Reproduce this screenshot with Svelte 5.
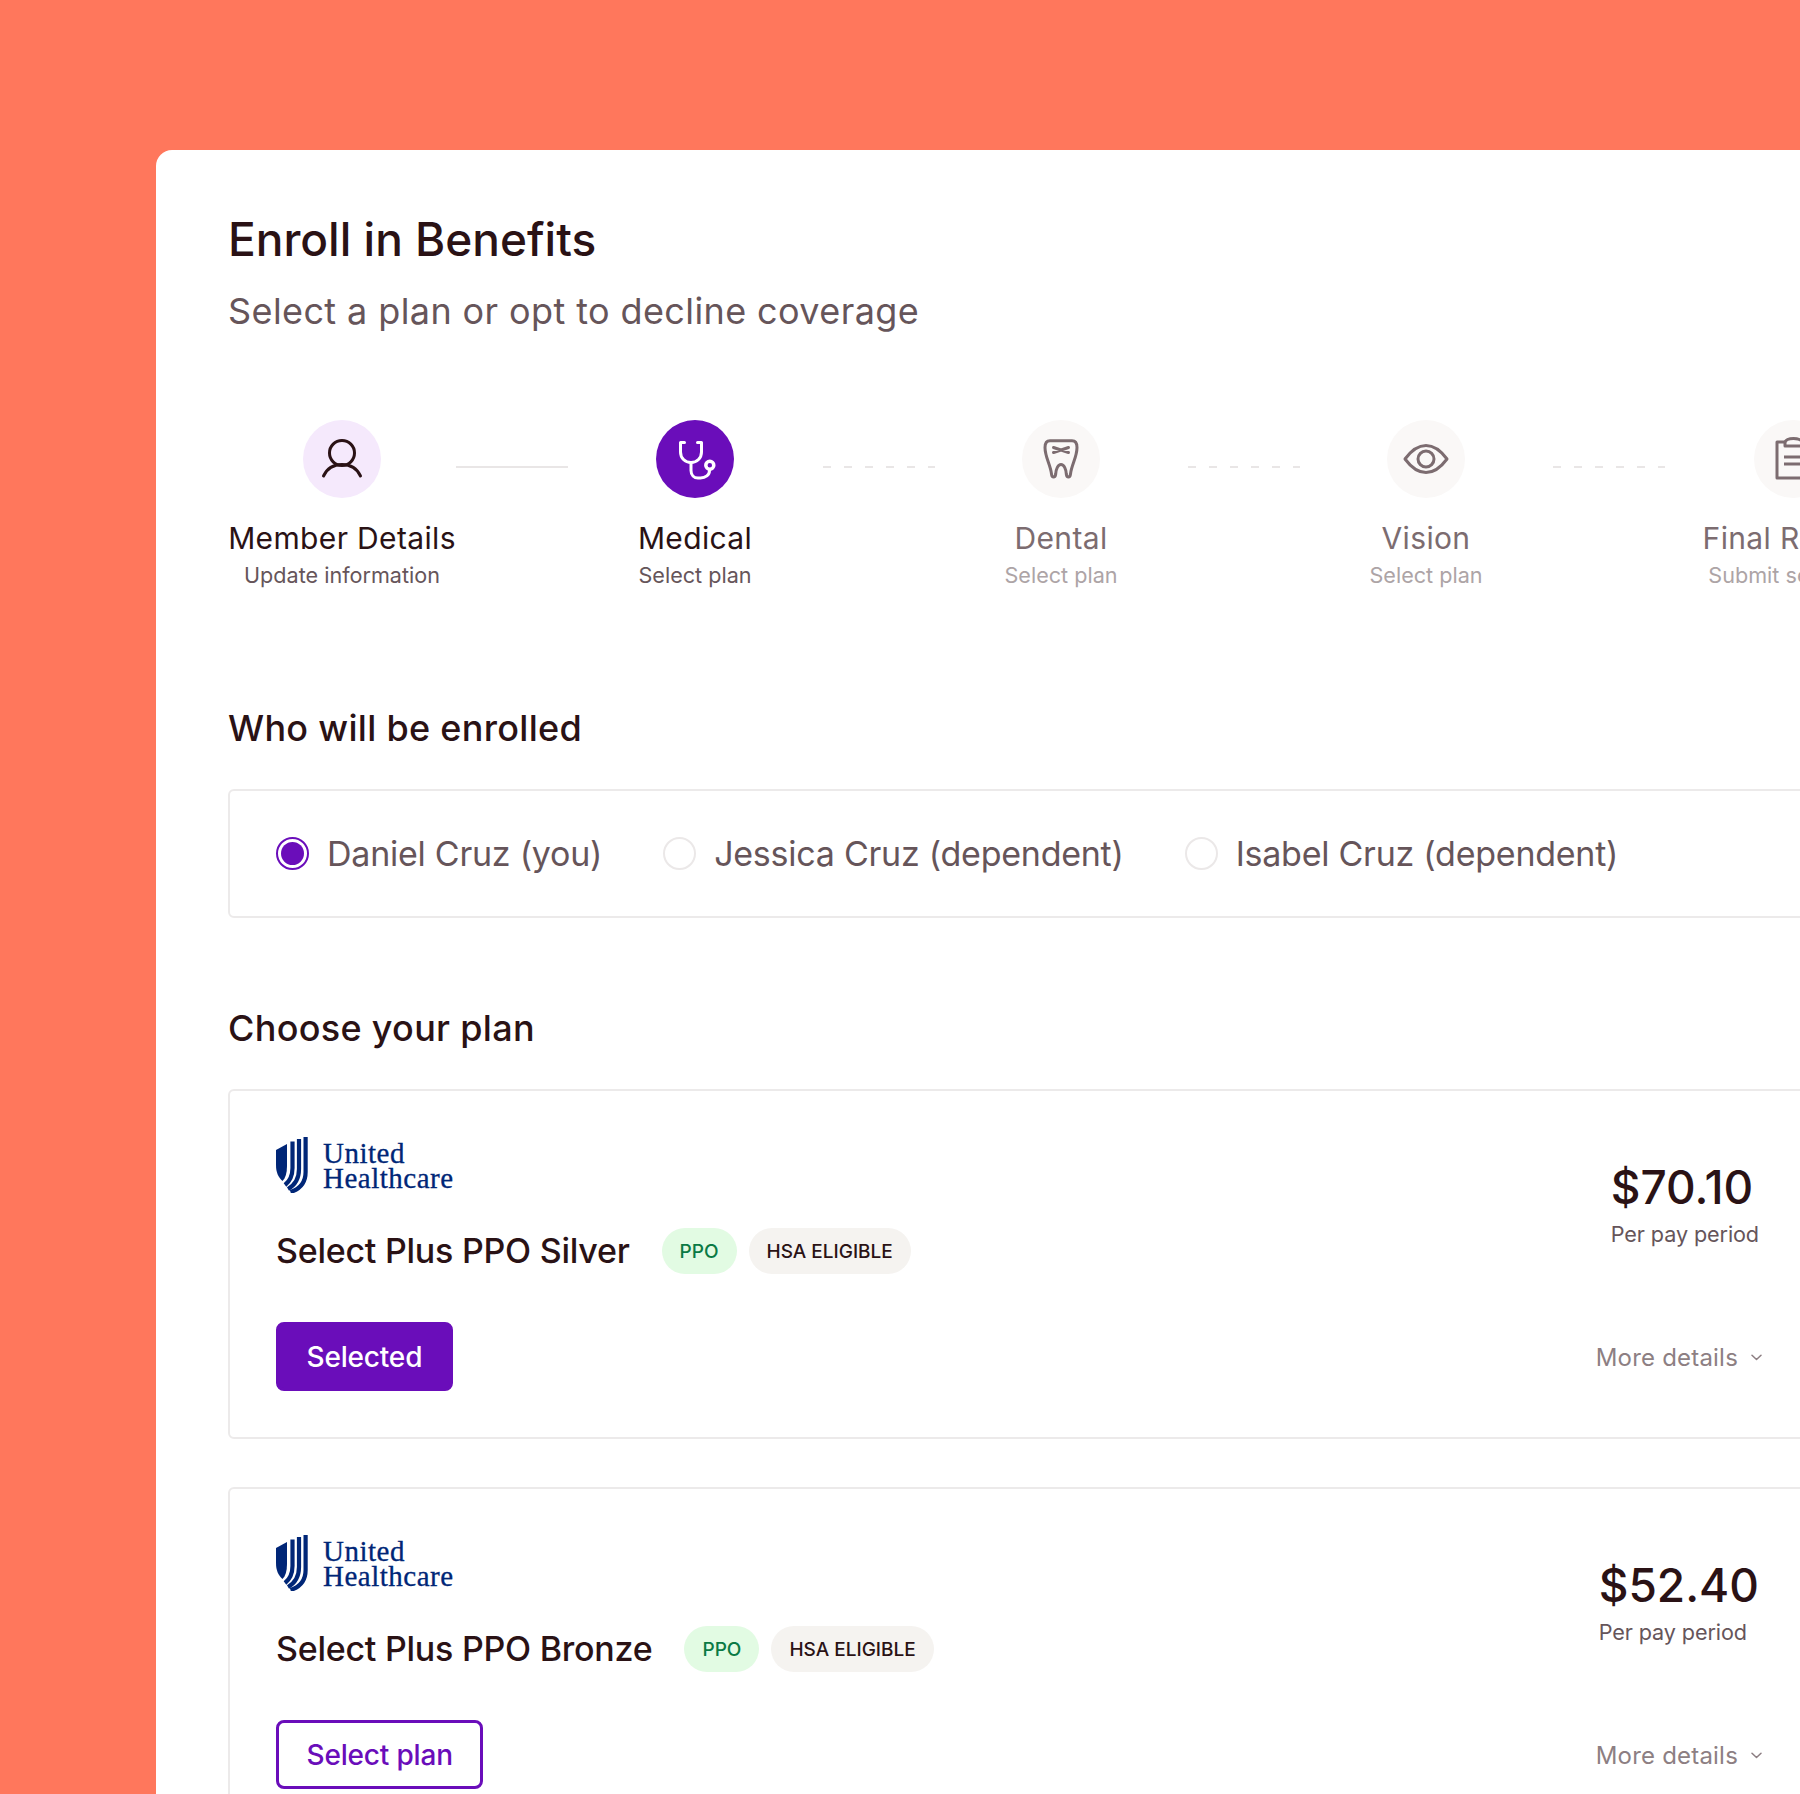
<script>
	const members = [
		{ name: 'Daniel Cruz (you)', checked: true },
		{ name: 'Jessica Cruz (dependent)', checked: false },
		{ name: 'Isabel Cruz (dependent)', checked: false }
	];

	const plans = [
		{ name: 'Select Plus PPO Silver', price: '$70.10', selected: true },
		{ name: 'Select Plus PPO Bronze', price: '$52.40', selected: false }
	];
</script>

{#snippet logo()}
	<div class="logo">
		<svg width="32" height="56" viewBox="0 0 32 56" fill="none" stroke="#002677" stroke-width="4.2">
			<path fill="#002677" stroke="none" d="M0 13L11 7V29C11 36 9.5 41 6.5 44C2 40 0 35 0 28Z" />
			<path d="M16.5 4.5V31C16.5 39 14 44 9 48" />
			<path d="M23 2V32C23 42 19 48 12 52" />
			<path d="M29.6 0V35C29.6 46 24 52 14.5 55" />
		</svg>
		<div class="wordmark">United<br />Healthcare</div>
	</div>
{/snippet}

<div class="page">
	<main class="card">
		<h1>Enroll in Benefits</h1>
		<p class="subtitle">Select a plan or opt to decline coverage</p>

		<div class="stepper">
			<div class="step done member">
				<div class="dot">
					<svg viewBox="0 0 48 48" width="48" height="48" fill="none" stroke="currentColor" stroke-width="3" stroke-linecap="round">
						<circle cx="24" cy="18" r="12.5" />
						<path d="M5.500 41C9 33.500 15.500 29.500 24 29.500C32.500 29.500 39 33.500 42.500 41" />
					</svg>
				</div>
				<div class="step-title">Member Details</div>
				<div class="step-sub">Update information</div>
			</div>
			<div class="line solid first"></div>

			<div class="step active">
				<div class="dot">
					<svg viewBox="0 0 48 48" width="48" height="48" fill="none" stroke="currentColor" stroke-width="3" stroke-linecap="round" stroke-linejoin="round">
						<path d="M13.500 7.500H9.500V17C9.500 23 14 27.500 20 27.500C26 27.500 30.500 23 30.500 17V7.500H26.500" />
						<path d="M20 27.500V35.500C20 40 23 43 27 43H29.500C34.500 43 38.500 40 38.500 35.500" />
						<circle cx="38.800" cy="30.200" r="4" stroke-width="3.500" />
					</svg>
				</div>
				<div class="step-title">Medical</div>
				<div class="step-sub">Select plan</div>
			</div>
			<div class="line"></div>

			<div class="step">
				<div class="dot">
					<svg viewBox="0 0 48 48" width="48" height="48" fill="none" stroke="currentColor" stroke-width="3" stroke-linecap="round" stroke-linejoin="round">
						<path d="M13 5.800H35C38.500 5.800 40 8.500 40 12.500C40 22 34.500 30 33.500 39C33 43 29.800 43 29.300 39C29 34 27 29.500 24 29.500C21 29.500 19 34 18.700 39C18.200 43 15 43 14.500 39C13.500 30 8 22 8 12.500C8 8.500 9.500 5.800 13 5.800Z" />
						<path d="M16.500 12.500L31.500 17.500M16.500 17.500L31.500 12.500" />
					</svg>
				</div>
				<div class="step-title">Dental</div>
				<div class="step-sub">Select plan</div>
			</div>
			<div class="line"></div>

			<div class="step">
				<div class="dot">
					<svg viewBox="0 0 48 48" width="48" height="48" fill="none" stroke="currentColor" stroke-width="3" stroke-linejoin="round">
						<path d="M3 24C10 14.500 17 10.500 24 10.500C31 10.500 38 14.500 45 24C38 33.500 31 37.500 24 37.500C17 37.500 10 33.500 3 24Z" />
						<circle cx="24" cy="24" r="8" />
					</svg>
				</div>
				<div class="step-title">Vision</div>
				<div class="step-sub">Select plan</div>
			</div>
			<div class="line last"></div>

			<div class="step final">
				<div class="dot">
					<svg viewBox="0 0 48 48" width="48" height="48" fill="none" stroke="currentColor" stroke-width="3" stroke-linejoin="round">
						<path d="M16 7H8V43H41V7H33" />
						<path d="M16 11H33V8C33 5 29 3.500 24.500 3.500C20 3.500 16 5 16 8Z" />
						<path d="M15 22H34M15 29H34" />
					</svg>
				</div>
				<div class="step-title">Final Review</div>
				<div class="step-sub">Submit selection</div>
			</div>
		</div>

		<h2>Who will be enrolled</h2>
		<div class="members">
			{#each members as member}
				<label class="member-option">
					<span class="radio" class:checked={member.checked}></span>
					{member.name}
				</label>
			{/each}
		</div>

		<h2 class="plans-heading">Choose your plan</h2>
		<div class="plans">
			{#each plans as plan}
				<section class="plan">
					<div class="plan-left">
						{@render logo()}
						<div class="plan-name-row">
							<h3>{plan.name}</h3>
							<span class="badge green">PPO</span>
							<span class="badge">HSA ELIGIBLE</span>
						</div>
						<button type="button" class="btn" class:filled={plan.selected}>
							{plan.selected ? 'Selected' : 'Select plan'}
						</button>
					</div>
					<div class="plan-right">
						<div class="price-block">
							<div class="price">{plan.price}</div>
							<div class="per">Per pay period</div>
						</div>
						<div class="more">
							More details
							<svg width="11" height="7" viewBox="0 0 11 7" fill="none" stroke="currentColor" stroke-width="1.500" stroke-linecap="round" stroke-linejoin="round">
								<path d="M1 1.200L5.500 5.500L10 1.200" />
							</svg>
						</div>
					</div>
				</section>
			{/each}
		</div>
	</main>
</div>

<style>
	:global(body) {
		margin: 0;
		background: #ff775c;
	}

	.page {
		height: 1794px;
		overflow: hidden;
		padding: 150px 0 0 156px;
		box-sizing: border-box;
		font-family: Inter, "Liberation Sans", sans-serif;
		color: #2a1215;
	}

	.card {
		width: 1726px;
		min-height: 1700px;
		box-sizing: border-box;
		padding: 59px 72px 0;
		background: #fff;
		border-radius: 16px 0 0 0;
	}

	h1 {
		margin: 0;
		font-size: 46px;
		line-height: 60px;
		font-weight: 470;
	}

	.subtitle {
		margin: 20px 0 0;
		font-size: 36px;
		line-height: 44px;
		letter-spacing: 0.4px;
		color: #66555a;
	}

	.stepper {
		display: flex;
		align-items: flex-start;
		margin-top: 87px;
		width: 1640px;
	}

	.step {
		flex: none;
		width: 112px;
		display: flex;
		flex-direction: column;
		align-items: center;
		white-space: nowrap;
		color: #7c6c70;
	}

	.step.member {
		width: 228px;
	}

	.step.active {
		width: 114px;
	}

	.step.final {
		width: 180px;
	}

	.dot {
		flex: none;
		width: 78px;
		height: 78px;
		border-radius: 50%;
		display: flex;
		align-items: center;
		justify-content: center;
		background: #faf8f7;
	}

	.done .dot {
		background: #f5e9fc;
		color: #2a1215;
	}

	.active .dot {
		background: #6a0dba;
		color: #fff;
	}

	.step-title {
		margin-top: 22px;
		font-size: 30px;
		line-height: 36px;
		letter-spacing: 0.35px;
	}

	.step-sub {
		margin-top: 1px;
		font-size: 21.6px;
		line-height: 36px;
		color: #ada4a6;
	}

	.done,
	.active {
		color: #2a1215;
	}

	.done .step-sub,
	.active .step-sub {
		color: #66555a;
	}

	.line {
		flex: none;
		width: 112px;
		height: 2px;
		margin: 46px 70px 0 71px;
		background: repeating-linear-gradient(90deg, #e9e6e6 0 8px, transparent 8px 21px);
	}

	.line.solid {
		background: #e9e6e6;
	}

	.line.first {
		margin-left: 0;
	}

	.line.last {
		margin-right: 38px;
	}

	h2 {
		margin: 113px 0 0;
		font-size: 36px;
		line-height: 44px;
		font-weight: 470;
		letter-spacing: 0.3px;
	}

	.plans-heading {
		margin-top: 88px;
	}

	.members {
		display: flex;
		align-items: center;
		gap: 61px;
		width: 1582px;
		height: 129px;
		margin-top: 39px;
		padding: 0 46px;
		box-sizing: border-box;
		border: 2px solid #eceaea;
		border-radius: 6px;
	}

	.member-option {
		display: flex;
		align-items: center;
		gap: 18px;
		font-size: 34px;
		letter-spacing: -0.25px;
		color: #66555a;
	}

	.radio {
		flex: none;
		width: 33px;
		height: 33px;
		box-sizing: border-box;
		border-radius: 50%;
		border: 2px solid #ebe8e8;
		background: #fff;
	}

	.radio.checked {
		border-color: #6a0dba;
		padding: 3px;
		background: #6a0dba content-box;
	}

	.plans {
		display: flex;
		flex-direction: column;
		gap: 48px;
		margin-top: 39px;
	}

	.plan {
		display: flex;
		justify-content: space-between;
		width: 1582px;
		box-sizing: border-box;
		padding: 46px;
		border: 2px solid #eceaea;
		border-radius: 6px;
	}

	.logo {
		display: flex;
		align-items: flex-start;
		gap: 15px;
		height: 56px;
	}

	.wordmark {
		margin-top: 4px;
		font-family: "Liberation Serif", serif;
		font-size: 29px;
		line-height: 25px;
		letter-spacing: 0.5px;
		-webkit-text-stroke: 0.3px #002677;
		color: #002677;
	}

	.plan-name-row {
		display: flex;
		align-items: center;
		margin-top: 35px;
		gap: 12px;
	}

	h3 {
		margin: 0 20px 0 0;
		font-size: 34px;
		line-height: 46px;
		font-weight: 470;
		letter-spacing: -0.25px;
	}

	.badge {
		height: 46px;
		padding: 0 18px;
		display: flex;
		align-items: center;
		border-radius: 23px;
		background: #f5f3f0;
		font-size: 19px;
		font-weight: 470;
	}

	.badge.green {
		background: #e2fbe3;
		color: #0b7a45;
	}

	.btn {
		display: block;
		height: 69px;
		margin-top: 48px;
		padding: 0 27.5px;
		border: 3px solid #6a0dba;
		border-radius: 8px;
		background: #fff;
		color: #6a0dba;
		font: 470 28px Inter, "Liberation Sans", sans-serif;
		letter-spacing: -0.18px;
	}

	.btn.filled {
		background: #6a0dba;
		color: #fff;
	}

	.plan-right {
		display: flex;
		flex-direction: column;
		justify-content: space-between;
		align-items: flex-end;
	}

	.price-block {
		margin: 22px 3px 0 0;
	}

	.price {
		font-size: 46px;
		line-height: 56px;
		font-weight: 470;
	}

	.per {
		margin-top: 4px;
		font-size: 21.6px;
		line-height: 30px;
		letter-spacing: -0.1px;
		color: #66555a;
	}

	.more {
		display: flex;
		align-items: center;
		gap: 13px;
		height: 68px;
		font-size: 24px;
		letter-spacing: 0.2px;
		color: #8d7f83;
	}
</style>
